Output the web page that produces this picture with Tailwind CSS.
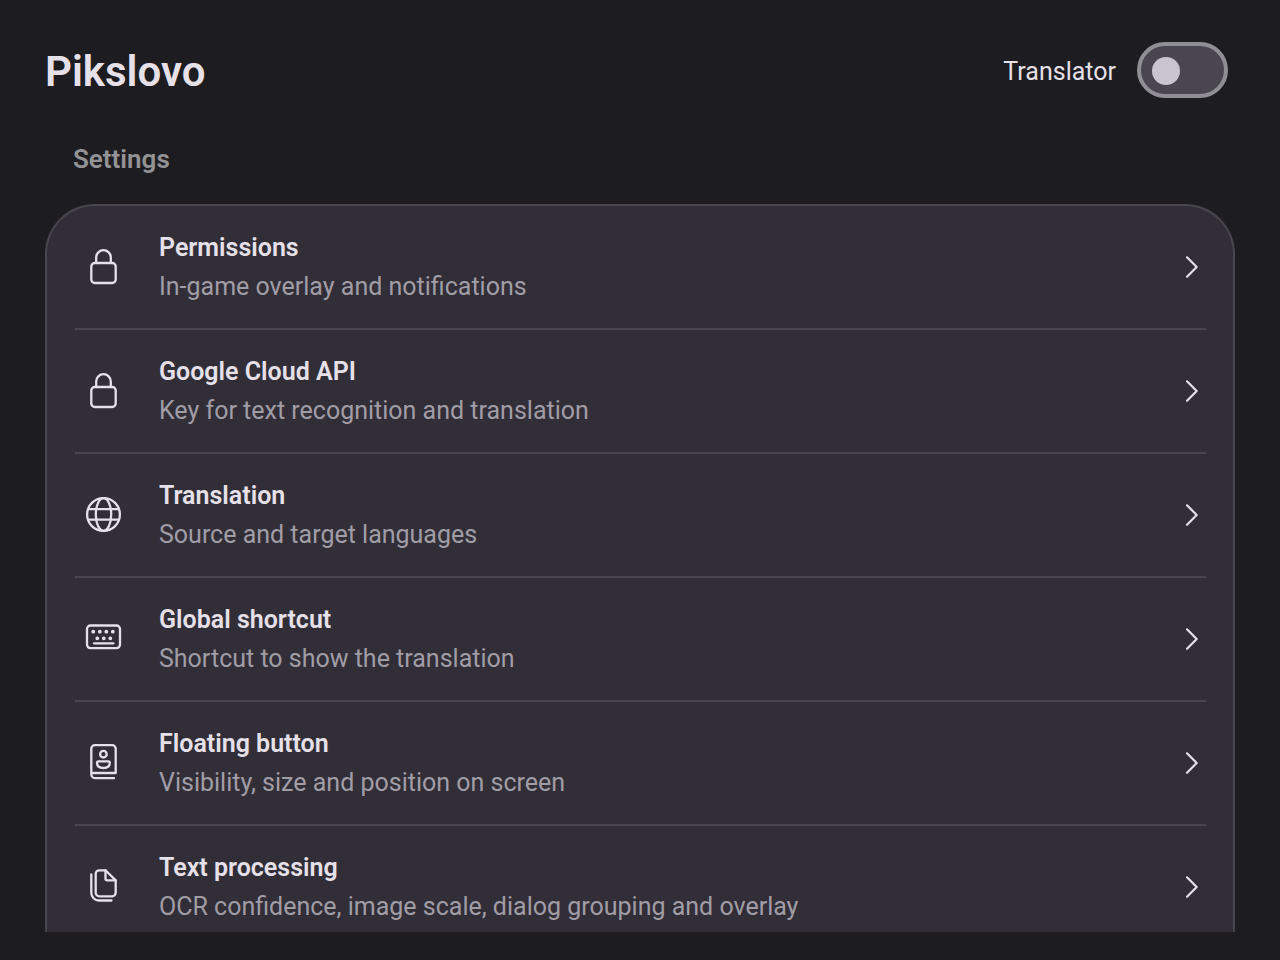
<!DOCTYPE html>
<html lang="en">
<head>
<meta charset="utf-8">
<meta name="viewport" content="width=device-width, initial-scale=1">
<title>Pikslovo</title>
<script src="https://cdn.jsdelivr.net/npm/@tailwindcss/browser@4"></script>
</head>
<body class="flex h-screen flex-col overflow-hidden bg-[#1d1c20] pb-7 font-['Roboto',sans-serif] text-[25px] text-[#e6e0e9]">
<header class="flex shrink-0 items-center justify-between pt-[42px] pr-[52px] pl-[45px]">
  <h1 class="pt-1 text-[42px] leading-13 font-semibold">Pikslovo</h1>
  <div class="flex items-center gap-[21px]">
    <label for="translator" class="pt-1 leading-13">Translator</label>
    <input id="translator" type="checkbox" role="switch" class="h-14 w-[91px] cursor-pointer appearance-none rounded-full border-4 border-[#918f96] bg-[#49464f] p-0 before:mt-[11px] before:ml-[11px] before:block before:size-7 before:rounded-full before:bg-[#cac4d0] checked:before:ml-11">
  </div>
</header>
<main class="flex min-h-0 flex-1 flex-col px-[45px] pt-[42px]">
  <h2 class="px-7 pb-[25px] text-[26px] leading-[39px] font-semibold text-[#939295]">Settings</h2>
  <nav class="min-h-0 flex-1 overflow-hidden rounded-t-[50px] border-2 border-b-0 border-[#48464c] bg-[#312e38] pr-[27px] pl-7">
    <ul class="divide-y-2 divide-[#48464f]">
      <li><a href="#permissions" class="flex items-center py-[22px] pr-[7px] pl-[9px]">
        <svg class="mr-[35px] size-10 shrink-0" viewBox="0 0 40 40" fill="none" stroke="currentColor" stroke-width="2.3" stroke-linecap="round" stroke-linejoin="round" aria-hidden="true"><rect x="7.3" y="16" width="24.4" height="20" rx="3.5"/><path d="M12.2 16v-5.500a7.300 7.300 0 0 1 14.600 0V16"/></svg>
        <span class="flex min-w-0 flex-1 flex-col leading-[39px]"><span class="font-semibold">Permissions</span><span class="text-[#a19da6]">In-game overlay and notifications</span></span>
        <svg class="h-6 w-4 shrink-0" viewBox="0 0 16 24" fill="none" stroke="currentColor" stroke-width="2.2" stroke-linecap="round" stroke-linejoin="round" aria-hidden="true"><path d="M4 2.300l9.700 9.700L4 21.700"/></svg>
      </a></li>
      <li><a href="#google-cloud-api" class="flex items-center py-[22px] pr-[7px] pl-[9px]">
        <svg class="mr-[35px] size-10 shrink-0" viewBox="0 0 40 40" fill="none" stroke="currentColor" stroke-width="2.3" stroke-linecap="round" stroke-linejoin="round" aria-hidden="true"><rect x="7.3" y="16" width="24.4" height="20" rx="3.5"/><path d="M12.2 16v-5.500a7.300 7.300 0 0 1 14.600 0V16"/></svg>
        <span class="flex min-w-0 flex-1 flex-col leading-[39px]"><span class="font-semibold">Google Cloud API</span><span class="text-[#a19da6]">Key for text recognition and translation</span></span>
        <svg class="h-6 w-4 shrink-0" viewBox="0 0 16 24" fill="none" stroke="currentColor" stroke-width="2.2" stroke-linecap="round" stroke-linejoin="round" aria-hidden="true"><path d="M4 2.300l9.700 9.700L4 21.700"/></svg>
      </a></li>
      <li><a href="#translation" class="flex items-center py-[22px] pr-[7px] pl-[9px]">
        <svg class="mr-[35px] size-10 shrink-0" viewBox="0 0 40 40" fill="none" stroke="currentColor" stroke-width="2.3" aria-hidden="true"><circle cx="19.5" cy="19.5" r="16.4"/><ellipse cx="19.5" cy="19.5" rx="7.7" ry="16.4"/><path d="M4 14.200h31M4 24.600h31"/></svg>
        <span class="flex min-w-0 flex-1 flex-col leading-[39px]"><span class="font-semibold">Translation</span><span class="text-[#a19da6]">Source and target languages</span></span>
        <svg class="h-6 w-4 shrink-0" viewBox="0 0 16 24" fill="none" stroke="currentColor" stroke-width="2.2" stroke-linecap="round" stroke-linejoin="round" aria-hidden="true"><path d="M4 2.300l9.700 9.700L4 21.700"/></svg>
      </a></li>
      <li><a href="#global-shortcut" class="flex items-center py-[22px] pr-[7px] pl-[9px]">
        <svg class="mr-[35px] size-10 shrink-0" viewBox="0 0 40 40" fill="none" stroke="currentColor" stroke-width="2.3" stroke-linecap="round" aria-hidden="true"><rect x="3" y="6.500" width="33" height="22.600" rx="3.500"/><path d="M10 24.300h19.500"/><path stroke-width="3.800" d="M9.200 12.700h.01M15.800 12.700h.01M22.300 12.700h.01M28.800 12.700h.01M13.300 19.300h.01M19.800 19.300h.01M26.300 19.300h.01"/></svg>
        <span class="flex min-w-0 flex-1 flex-col leading-[39px]"><span class="font-semibold">Global shortcut</span><span class="text-[#a19da6]">Shortcut to show the translation</span></span>
        <svg class="h-6 w-4 shrink-0" viewBox="0 0 16 24" fill="none" stroke="currentColor" stroke-width="2.2" stroke-linecap="round" stroke-linejoin="round" aria-hidden="true"><path d="M4 2.300l9.700 9.700L4 21.700"/></svg>
      </a></li>
      <li><a href="#floating-button" class="flex items-center py-[22px] pr-[7px] pl-[9px]">
        <svg class="mr-[35px] size-10 shrink-0" viewBox="0 0 40 40" fill="none" stroke="currentColor" stroke-width="2.3" stroke-linecap="round" stroke-linejoin="round" aria-hidden="true"><path d="M7.300 30h24.400V5.700a3.500 3.500 0 0 0-3.500-3.500H10.800a3.500 3.500 0 0 0-3.500 3.500V31.200a4 4 0 0 0 4 4H30"/><circle cx="19.400" cy="11.200" r="3.300"/><path d="M14.400 18.400h10a1.400 1.400 0 0 1 1.400 1.400c0 3.300-2.200 5.200-6.400 5.200S13 23.100 13 19.800a1.400 1.400 0 0 1 1.400-1.400z"/></svg>
        <span class="flex min-w-0 flex-1 flex-col leading-[39px]"><span class="font-semibold">Floating button</span><span class="text-[#a19da6]">Visibility, size and position on screen</span></span>
        <svg class="h-6 w-4 shrink-0" viewBox="0 0 16 24" fill="none" stroke="currentColor" stroke-width="2.2" stroke-linecap="round" stroke-linejoin="round" aria-hidden="true"><path d="M4 2.300l9.700 9.700L4 21.700"/></svg>
      </a></li>
      <li><a href="#text-processing" class="flex items-center py-[22px] pr-[7px] pl-[9px]">
        <svg class="mr-[35px] size-10 shrink-0" viewBox="0 0 40 40" fill="none" stroke="currentColor" stroke-width="2.3" stroke-linecap="round" stroke-linejoin="round" aria-hidden="true"><path d="M15.200 3.300h6.300L31.700 13.400v12.400a3.500 3.500 0 0 1-3.500 3.500h-13a3.500 3.500 0 0 1-3.500-3.500v-19a3.500 3.500 0 0 1 3.500-3.500z"/><path d="M21.500 3.300v8.600a1.500 1.500 0 0 0 1.500 1.500h8.700M7.300 7.500v18.300a7.700 7.700 0 0 0 7.700 7.700h12.500"/></svg>
        <span class="flex min-w-0 flex-1 flex-col leading-[39px]"><span class="font-semibold">Text processing</span><span class="text-[#a19da6]">OCR confidence, image scale, dialog grouping and overlay</span></span>
        <svg class="h-6 w-4 shrink-0" viewBox="0 0 16 24" fill="none" stroke="currentColor" stroke-width="2.2" stroke-linecap="round" stroke-linejoin="round" aria-hidden="true"><path d="M4 2.300l9.700 9.700L4 21.700"/></svg>
      </a></li>
    </ul>
  </nav>
</main>
</body>
</html>
